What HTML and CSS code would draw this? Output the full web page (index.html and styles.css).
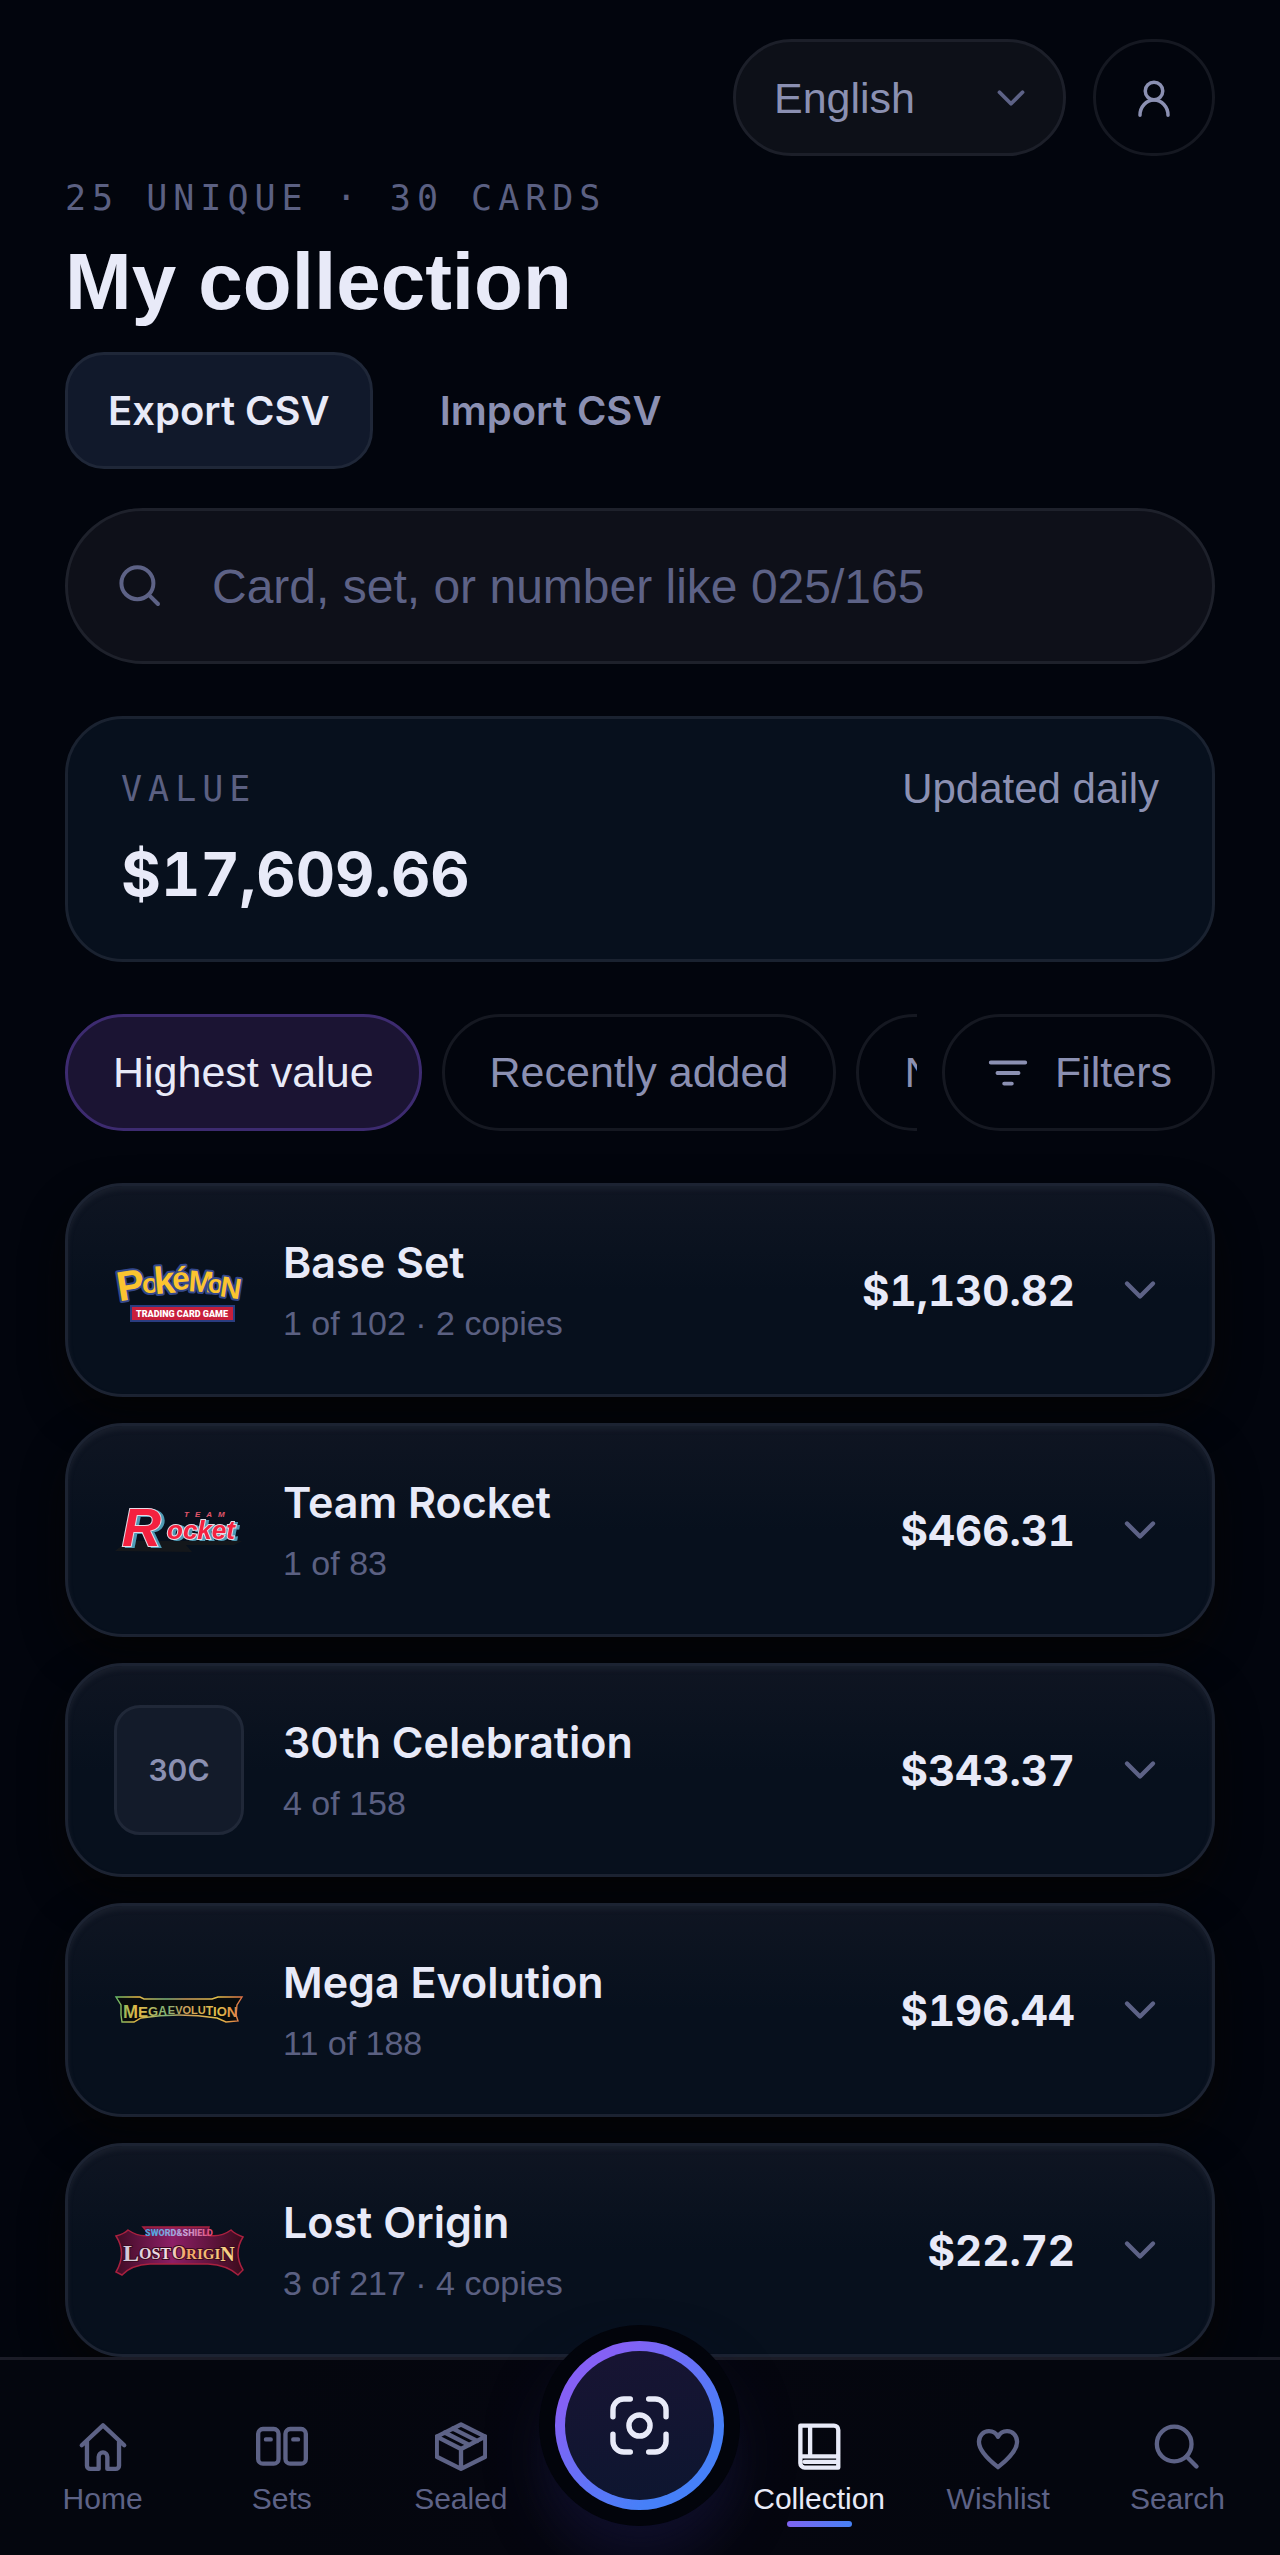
FILE: index.html
```html
<!DOCTYPE html>
<html lang="en">
  <head>
    <meta charset="utf-8">
    <meta name="viewport" content="width=device-width">
    <title>My collection</title>
    <link rel="stylesheet" href="styles.css">
  </head>

<body>
  <svg class="defs" aria-hidden="true">
    <symbol id="chevron" viewBox="0 0 24 24"><path d="M6 9l6 6 6-6"/></symbol>
    <symbol id="search" viewBox="0 0 24 24"><circle cx="10.7" cy="10.6" r="8"/><path d="M16.4 16.4L21 21"/></symbol>
  </svg>

  <main class="page">
    <div class="topbar">
      <div class="select-wrapper">
        <select aria-label="Language" name="language">
          <option>English</option>
          <option>Deutsch</option>
        </select>
        <svg class="icon"><use href="#chevron"/></svg>
      </div>
      <button class="account" aria-label="Account">
        <svg class="icon" viewBox="0 0 24 24"><circle cx="12" cy="8" r="5"/><path d="M4 21.8a8 8.6 0 0 1 16 0"/></svg>
      </button>
    </div>

    <p class="eyebrow">25 UNIQUE · 30 CARDS</p>
    <h1>My collection</h1>

    <div class="actions">
      <button class="action primary">Export CSV</button>
      <button class="action">Import CSV</button>
    </div>

    <label class="search">
      <svg class="icon"><use href="#search"/></svg>
      <input type="text" name="q" aria-label="Search collection" placeholder="Card, set, or number like 025/165">
    </label>

    <section class="value">
      <div class="value-head">
        <span class="eyebrow">VALUE</span>
        <span>Updated daily</span>
      </div>
      <strong>$17,609.66</strong>
    </section>

    <div class="toolbar">
      <div class="chips">
        <button class="chip active">Highest value</button>
        <button class="chip">Recently added</button>
        <button class="chip">Name</button>
      </div>
      <button class="chip filters">
        <svg class="icon" viewBox="0 0 24 24"><path d="M3 6.500h18M6.500 12h11M10 17.500h4"/></svg>
        Filters
      </button>
    </div>

    <ul class="sets">
      <li>
        <button class="set">
          <svg class="logo" viewBox="0 0 130 130" role="img" aria-label="Pokémon Trading Card Game">
            <g class="pokemon">
              <text font-size="42" transform="rotate(-9 14 75)" x="5" y="75">P</text>
              <text font-size="28" x="28" y="68">o</text>
              <text font-size="38" transform="rotate(-5 45 69)" x="41" y="69">k</text>
              <text font-size="32" transform="rotate(-5 62 65)" x="59" y="65">é</text>
              <text font-size="30" x="74" y="66" transform="rotate(4 74 66)">M</text>
              <text font-size="25" x="94" y="68">o</text>
              <text font-size="29" x="105" y="71" transform="rotate(9 105 71)">N</text>
            </g>
            <rect x="17" y="81" width="103" height="15" fill="#c81f3b" stroke="#2b3d80" stroke-width="2"/>
            <text class="pokemon-band" x="68" y="92">TRADING CARD GAME</text>
          </svg>
          <span class="info">
            <span class="name">Base Set</span>
            <span class="count">1 of 102 · 2 copies</span>
          </span>
          <span class="price">$1,130.82</span>
          <svg class="icon"><use href="#chevron"/></svg>
        </button>
      </li>
      <li>
        <button class="set">
          <svg class="logo" viewBox="0 0 130 130" role="img" aria-label="Team Rocket">
            <path d="M1 86L14 76H128L120 80H72L78 87z" fill="#14171b"/>
            <g class="rocket">
              <text x="8" y="81" font-size="54">R</text>
              <text x="53" y="74" font-size="26">ocket</text>
            </g>
            <text class="rocket-team" x="70" y="52">TEAM</text>
          </svg>
          <span class="info">
            <span class="name">Team Rocket</span>
            <span class="count">1 of 83</span>
          </span>
          <span class="price">$466.31</span>
          <svg class="icon"><use href="#chevron"/></svg>
        </button>
      </li>
      <li>
        <button class="set">
          <span class="logo code">30C</span>
          <span class="info">
            <span class="name">30th Celebration</span>
            <span class="count">4 of 158</span>
          </span>
          <span class="price">$343.37</span>
          <svg class="icon"><use href="#chevron"/></svg>
        </button>
      </li>
      <li>
        <button class="set">
          <svg class="logo" viewBox="0 0 130 130" role="img" aria-label="Mega Evolution">
            <linearGradient id="mega" x2="130" gradientUnits="userSpaceOnUse">
              <stop offset="0" stop-color="#5cb96b"/>
              <stop offset=".18" stop-color="#e8b844"/>
              <stop offset=".4" stop-color="#7fb57a"/>
              <stop offset=".55" stop-color="#d0a05c"/>
              <stop offset=".8" stop-color="#e2c04a"/>
              <stop offset="1" stop-color="#dd6a45"/>
            </linearGradient>
            <path d="M2 52H26L30 54H98L104 52H128L123 60 122 70 124 76 112 77 103 73Q65 67 27 73L20 77 8 77 7 70 7 60z" fill="#080b0c" stroke="url(#mega)" stroke-width="1.400"/>
            <text class="mega" y="70"><tspan x="9" dy="3" font-size="18">M</tspan><tspan dy="-1" font-size="15">E</tspan><tspan dy="-1" font-size="13">G</tspan><tspan dy="-1" font-size="12">A</tspan><tspan dx="1" dy="-1" font-size="11">EVOLU</tspan><tspan dy="1" font-size="12">T</tspan><tspan dy="1" font-size="13">I</tspan><tspan font-size="13">O</tspan><tspan dy="1" font-size="15">N</tspan></text>
          </svg>
          <span class="info">
            <span class="name">Mega Evolution</span>
            <span class="count">11 of 188</span>
          </span>
          <span class="price">$196.44</span>
          <svg class="icon"><use href="#chevron"/></svg>
        </button>
      </li>
      <li>
        <button class="set">
          <svg class="logo" viewBox="0 0 130 130" role="img" aria-label="Sword and Shield Lost Origin">
            <linearGradient id="lost-bg" x2="130" gradientUnits="userSpaceOnUse">
              <stop offset="0" stop-color="#3d0b22"/>
              <stop offset=".45" stop-color="#8c1f66"/>
              <stop offset="1" stop-color="#3a0b1b"/>
            </linearGradient>
            <linearGradient id="lost-text" x2="130" gradientUnits="userSpaceOnUse">
              <stop offset="0" stop-color="#c9c3d6"/>
              <stop offset=".42" stop-color="#f4dfe6"/>
              <stop offset=".55" stop-color="#f2a565"/>
              <stop offset="1" stop-color="#f8e291"/>
            </linearGradient>
            <linearGradient id="sword" x2="130" gradientUnits="userSpaceOnUse">
              <stop offset=".3" stop-color="#4fa6e0"/>
              <stop offset=".55" stop-color="#c9a5d8"/>
              <stop offset=".75" stop-color="#e04a78"/>
            </linearGradient>
            <path d="M14 45Q26 53 36 50L29 42H95L93 50Q106 53 117 45Q121 49 129 52Q119 68 129 85L124 90Q113 80 94 79H36Q17 80 8 90L2 87Q13 68 2 51Q10 49 14 45z" fill="url(#lost-bg)" stroke="#a8203f" stroke-width="1.500"/>
            <text class="sword" x="65" y="51">SWORD&amp;SHIELD</text>
            <text class="lost" y="75"><tspan x="9" dy="1" font-size="24">L</tspan><tspan dy="-2" font-size="16">OST</tspan><tspan dx="1" font-size="18">O</tspan><tspan font-size="15">RIGI</tspan><tspan dy="2" font-size="20">N</tspan></text>
          </svg>
          <span class="info">
            <span class="name">Lost Origin</span>
            <span class="count">3 of 217 · 4 copies</span>
          </span>
          <span class="price">$22.72</span>
          <svg class="icon"><use href="#chevron"/></svg>
        </button>
      </li>
    </ul>
  </main>

  <nav class="tabs">
    <a href="#home">
      <svg class="icon" viewBox="0 0 24 24"><path d="M2.200 11.200L12 2l9.800 9.200M4.600 9.500v11.100a1.500 1.500 0 0 0 1.500 1.500h3.900v-5.600a2 2 0 0 1 4 0v5.600h3.900a1.500 1.500 0 0 0 1.500-1.500V9.500"/></svg>
      Home
    </a>
    <a href="#sets">
      <svg class="icon" viewBox="0 0 24 24"><rect x="1" y="3.700" width="9.400" height="16" rx="2.200"/><rect x="13.600" y="3.700" width="9.400" height="16" rx="2.200"/><path d="M4.600 8.500h2.200M17.200 8.500h2.200"/></svg>
      Sets
    </a>
    <a href="#sealed">
      <svg class="icon" viewBox="0 0 24 24"><path d="M12 1.600l11.200 5.600v9.300L12 22.100.8 16.500V7.200zM.8 7.200L12 12.900l11.200-5.700M12 12.900v9.200M4.500 5.300l11.300 5.800M8.200 3.500l11.300 5.700"/></svg>
      Sealed
    </a>
    <a href="#scan" class="scan" aria-label="Scan">
      <svg class="icon" viewBox="0 0 24 24"><path d="M2.200 8.800V6.200a4 4 0 0 1 4-4h2.400M15.400 2.200h2.400a4 4 0 0 1 4 4v2.600M21.800 15.200v2.600a4 4 0 0 1-4 4h-2.400M8.600 21.800H6.200a4 4 0 0 1-4-4v-2.600"/><circle cx="12" cy="12" r="3.900"/></svg>
    </a>
    <a href="#collection" class="current" aria-current="page">
      <svg class="icon" viewBox="0 0 24 24"><path d="M3.400 2.100h15.500a2 2 0 0 1 2 2v17.400H5.400a2 2 0 0 1-2-2zM7.900 2.100v14.200M3.400 16.300h17.500M5.400 18.900h15"/></svg>
      Collection
    </a>
    <a href="#wishlist">
      <svg class="icon" viewBox="0 0 24 24"><path d="M12 21.300C7 17.400 3.200 13.600 3.200 9.600c0-2.900 2-4.900 4.600-4.900 1.800 0 3.400 1 4.200 2.600.8-1.600 2.400-2.600 4.200-2.600 2.600 0 4.600 2 4.600 4.900 0 4-3.800 7.800-8.800 11.700z"/></svg>
      Wishlist
    </a>
    <a href="#search">
      <svg class="icon"><use href="#search"/></svg>
      Search
    </a>
  </nav>
</body>

</html>
```
FILE: styles.css
```css
* {
  box-sizing: border-box;
}

body {
  margin: 0;
  min-height: 100vh;
  display: flex;
  flex-direction: column;
  background: #02050d;
  color: #e8eaf8;
  font-family: 'Liberation Sans', Arial, sans-serif;
  font-size: 42px;
}

button, input, select {
  font: inherit;
  color: inherit;
  margin: 0;
}

button {
  cursor: pointer;
}

.defs {
  display: none;
}

.icon {
  flex: none;
  width: 52px;
  height: 52px;
  fill: none;
  stroke: currentColor;
  stroke-width: 2;
  stroke-linecap: round;
  stroke-linejoin: round;
}

.page {
  flex: 1;
  padding: 39px 65px 0;
}

.topbar {
  display: flex;
  justify-content: flex-end;
  gap: 27px;
  color: #8b90b2;
}

.select-wrapper {
  position: relative;
  width: 333px;
}

.select-wrapper select {
  appearance: none;
  width: 100%;
  height: 117px;
  padding: 0 38px;
  background: #0d1018;
  border: 3px solid #1c1f29;
  border-radius: 59px;
  font-size: 43px;
}

.select-wrapper .icon {
  position: absolute;
  right: 32px;
  top: 36px;
  width: 46px;
  height: 46px;
  color: #5d6286;
  pointer-events: none;
}

.account {
  width: 122px;
  height: 117px;
  padding: 0;
  display: flex;
  align-items: center;
  justify-content: center;
  background: none;
  border: 3px solid #151821;
  border-radius: 61px;
}

.account .icon {
  width: 42px;
  height: 42px;
}

.eyebrow {
  margin: 18px 0 0;
  font-family: 'DejaVu Sans Mono', monospace;
  font-size: 35px;
  line-height: 48px;
  letter-spacing: 6px;
  color: #5b6082;
}

h1 {
  margin: 16px 0 26px;
  font-size: 80px;
  line-height: 88px;
  font-weight: 700;
}

.actions {
  display: flex;
  gap: 24px;
}

.action {
  height: 117px;
  padding: 0 40px;
  background: none;
  border: 3px solid transparent;
  border-radius: 39px;
  font-family: Inter, sans-serif;
  font-size: 40px;
  font-weight: 600;
  color: #8b90b2;
}

.action.primary {
  background: #11192b;
  border-color: #1f2738;
  color: #e8eaf8;
}

.search {
  display: flex;
  align-items: center;
  gap: 48px;
  height: 156px;
  margin-top: 39px;
  padding: 0 48px;
  background: #0e1019;
  border: 3px solid #1e212b;
  border-radius: 78px;
  color: #5d6286;
}

.search .icon {
  width: 48px;
  height: 48px;
}

.search input {
  flex: 1;
  min-width: 0;
  padding: 0;
  border: 0;
  background: none;
  outline: none;
  font-size: 48px;
}

.search input::placeholder {
  color: #5d6286;
}

.value {
  margin-top: 52px;
  padding: 39px 53px;
  background: #07101d;
  border: 3px solid #1a2230;
  border-radius: 58px;
}

.value-head {
  display: flex;
  justify-content: space-between;
  line-height: 62px;
  color: #8b90b2;
}

.value-head .eyebrow {
  margin: 0;
  line-height: 62px;
}

.value strong {
  display: block;
  margin-top: 8px;
  font-family: Inter, sans-serif;
  font-size: 61px;
  line-height: 92px;
  font-variant-numeric: tabular-nums;
}

.toolbar {
  display: flex;
  gap: 25px;
  margin-top: 52px;
}

.chips {
  flex: 1;
  min-width: 0;
  display: flex;
  gap: 20px;
  overflow: hidden;
}

.chip {
  flex: none;
  height: 117px;
  padding: 0 45px;
  background: none;
  border: 3px solid #151821;
  border-radius: 59px;
  font-size: 43px;
  color: #8b90b2;
}

.chip.active {
  background: #1b1433;
  border-color: #3d2b70;
  color: #e8eaf8;
}

.filters {
  display: flex;
  align-items: center;
  gap: 24px;
  padding: 0 40px;
}

.filters .icon {
  width: 46px;
  height: 46px;
}

.sets {
  list-style: none;
  display: flex;
  flex-direction: column;
  gap: 26px;
  margin: 52px 0 0;
  padding: 0;
}

.set {
  display: flex;
  align-items: center;
  gap: 39px;
  width: 100%;
  padding: 39px 46px;
  background: linear-gradient(#0f1522, #07101d 50%);
  border: 3px solid #1c2332;
  border-radius: 58px;
  box-shadow: inset 0 4px 4px #191f2c, 0 20px 40px #050506;
  text-align: left;
}

.set .icon {
  color: #5d6286;
}

.logo {
  flex: none;
  width: 130px;
  height: 130px;
}

.code {
  display: flex;
  align-items: center;
  justify-content: center;
  background: #131b2a;
  border: 3px solid #202838;
  border-radius: 26px;
  font-family: Inter, sans-serif;
  font-size: 30px;
  font-weight: 600;
  color: #8b90b2;
}

.info {
  flex: 1;
  min-width: 0;
}

.name, .count {
  display: block;
}

.name {
  font-family: Inter, sans-serif;
  font-size: 43px;
  font-weight: 600;
  line-height: 66px;
}

.count {
  font-size: 34px;
  line-height: 56px;
  color: #5b6082;
}

.price {
  font-family: Inter, sans-serif;
  font-size: 42px;
  font-weight: 700;
  font-variant-numeric: tabular-nums;
}

/* set logos */

.pokemon {
  font-weight: 700;
  fill: #fbc430;
  stroke: #34488c;
  stroke-width: 4;
  stroke-linejoin: round;
  paint-order: stroke;
}

.pokemon-band {
  font-family: Roboto, sans-serif;
  font-size: 9px;
  font-weight: 900;
  text-anchor: middle;
  fill: #ffffff;
}

.rocket {
  font-weight: 700;
  font-style: italic;
  fill: #f4213f;
  stroke: #e5dbe6;
  stroke-width: 2;
  paint-order: stroke;
  filter: drop-shadow(3px 1px 0 #4f9bb5);
}

.rocket-team {
  font-size: 8px;
  font-weight: 700;
  font-style: italic;
  letter-spacing: 6px;
  fill: #e0566b;
}

.mega {
  font-weight: 700;
  fill: url(#mega);
}

.sword {
  font-family: Roboto, sans-serif;
  font-size: 9px;
  font-weight: 900;
  text-anchor: middle;
  fill: url(#sword);
}

.lost {
  font-family: 'Liberation Serif', serif;
  font-weight: 700;
  fill: url(#lost-text);
  stroke: #3d0b22;
  stroke-width: 2;
  paint-order: stroke;
}

/* bottom navigation */

.tabs {
  position: sticky;
  bottom: 0;
  display: grid;
  grid-template-columns: repeat(7, 1fr);
  height: 198px;
  padding: 0 13px;
  background: radial-gradient(circle at 50% 60%, #0f0e29, #05060f 18%, #04060e 60%);
  border-top: 3px solid #1b1c27;
}

.tabs a {
  position: relative;
  display: flex;
  flex-direction: column;
  align-items: center;
  gap: 7px;
  padding-top: 61px;
  font-size: 30px;
  line-height: 38px;
  color: #5d6286;
  text-decoration: none;
}

.tabs .current {
  color: #e8eaf8;
}

.tabs .current::after {
  content: "";
  position: absolute;
  top: 161px;
  width: 65px;
  height: 6px;
  border-radius: 3px;
  background: linear-gradient(90deg, #7f63f0, #4680f4);
}

/* raised scan button, overlaps the list above */
.tabs .scan {
  justify-self: center;
  justify-content: center;
  width: 169px;
  height: 169px;
  margin-top: -19px;
  padding: 0;
  border: 10px solid transparent;
  border-radius: 50%;
  background:
    linear-gradient(170deg, #181433, #0d1630) padding-box,
    linear-gradient(135deg, #8560f5 20%, #4680f8 75%) border-box;
  box-shadow: 0 0 0 16px #02040b, 0 30px 60px 4px #0f0f2b;
  color: #e8eaf8;
}

.scan .icon {
  width: 65px;
  height: 65px;
}
```
